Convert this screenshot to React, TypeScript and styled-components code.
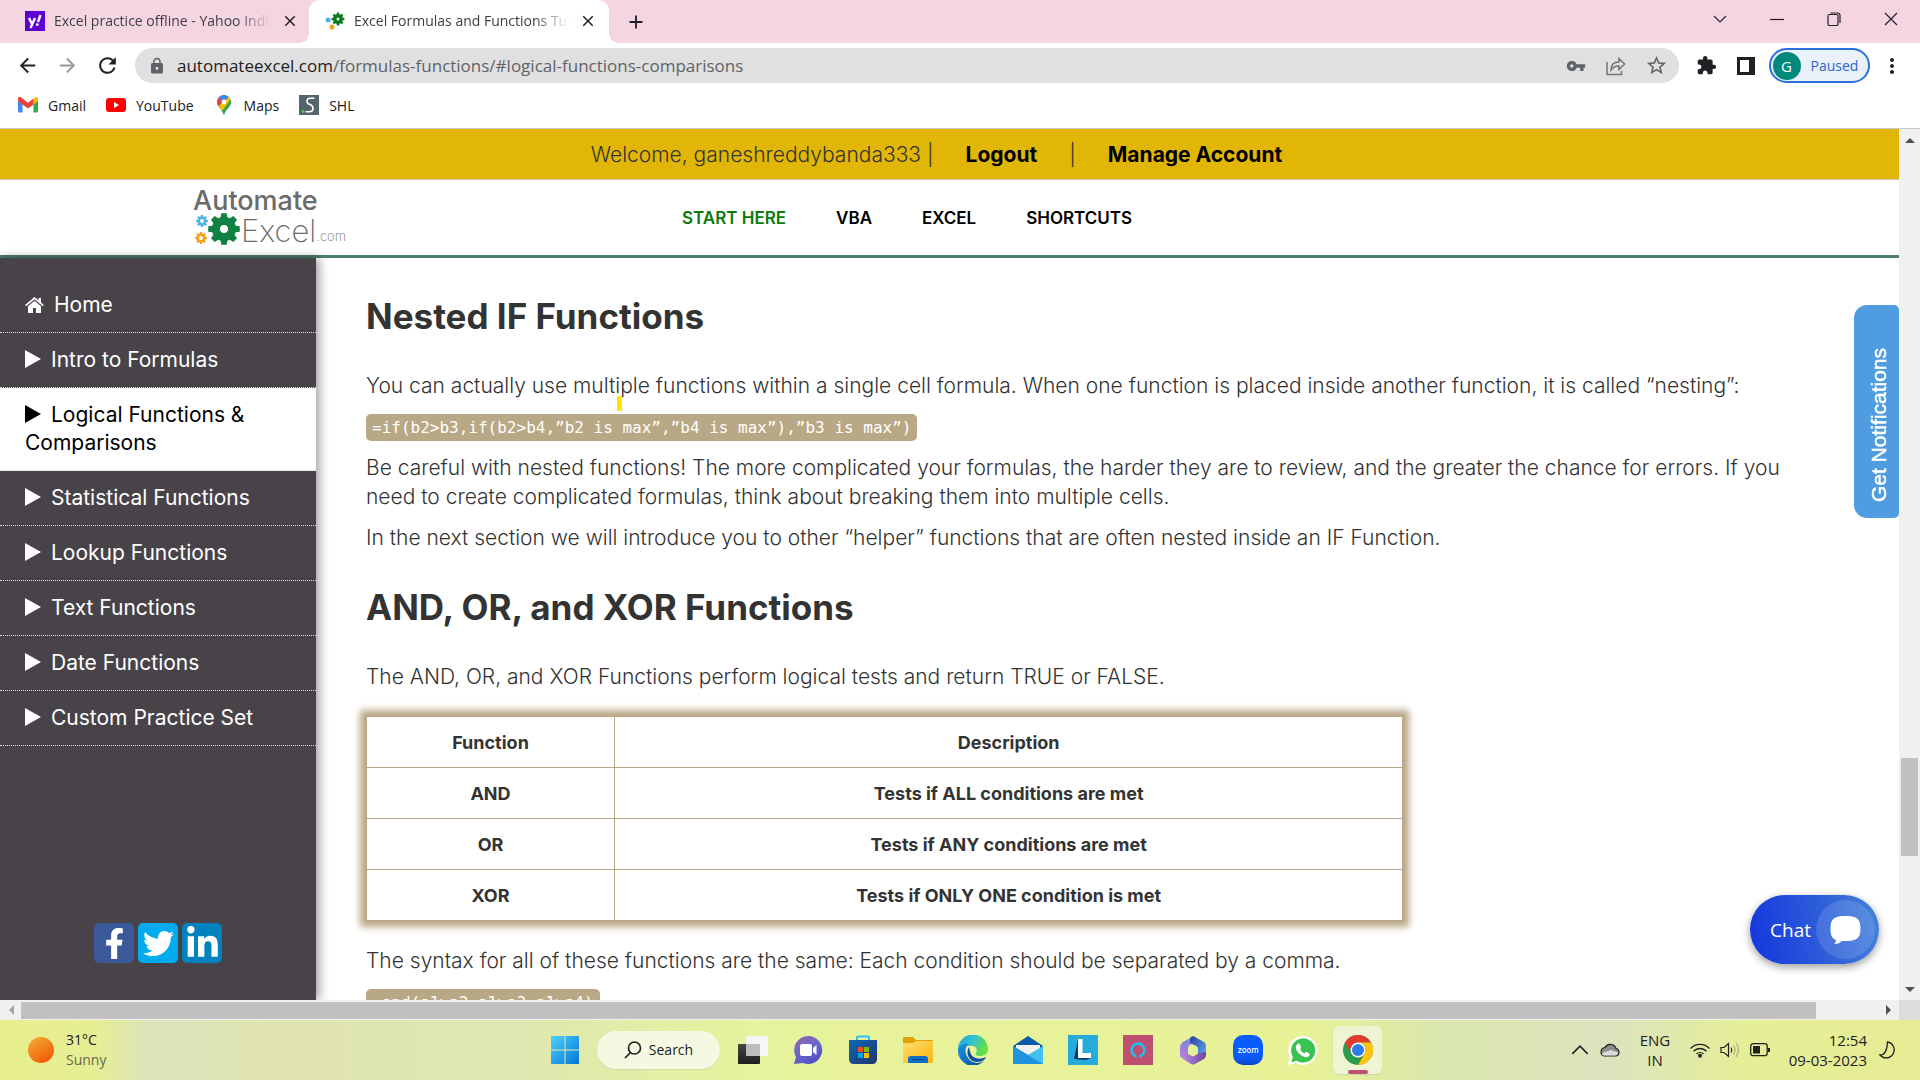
import React from "react";
import styled, { createGlobalStyle } from "styled-components";
import { MdExtension, MdLock, MdVpnKey, MdStarOutline, MdMoreVert, MdArrowBack, MdArrowForward, MdRefresh, MdClose, MdAdd } from "react-icons/md";
import { FaFacebookF, FaTwitter, FaLinkedinIn } from "react-icons/fa";

const site = `Inter, "Open Sans", sans-serif`;
const ui = `"Open Sans", "Noto Sans", sans-serif`;

const Global = createGlobalStyle`
  *, *::before, *::after { box-sizing: border-box; }
  html, body { margin: 0; height: 100%; overflow: hidden; }
  body { font-family: ${ui}; background: #fff; }
  button { font: inherit; border: 0; padding: 0; background: none; color: inherit; display: flex; align-items: center; justify-content: center; }
  a { color: inherit; text-decoration: none; }
  svg { display: block; flex: none; }
`;

const Screen = styled.div`
  display: flex;
  flex-direction: column;
  height: 100vh;
`;

/* ---------- browser chrome ---------- */
const TabStrip = styled.div`
  display: flex;
  height: 43px;
  background: #f6d5e3;
`;
const Tab = styled.div<{ $active?: boolean }>`
  display: flex;
  align-items: center;
  gap: 9px;
  position: relative;
  width: ${(p) => (p.$active ? 300 : 309)}px;
  padding: 0 ${(p) => (p.$active ? 11 : 9)}px 2px ${(p) => (p.$active ? 16 : 25)}px;
  background: ${(p) => (p.$active ? "#fff" : "transparent")};
  border-radius: 11px 11px 0 0;
  &::before, &::after {
    content: "";
    display: ${(p) => (p.$active ? "block" : "none")};
    position: absolute;
    bottom: 0;
    width: 10px;
    height: 10px;
  }
  &::before { left: -10px; background: radial-gradient(circle at 0 0, transparent 10px, #fff 10px); }
  &::after { right: -10px; background: radial-gradient(circle at 100% 0, transparent 10px, #fff 10px); }
`;
const TabTitle = styled.span`
  flex: 1;
  min-width: 0;
  white-space: nowrap;
  font-size: 14px;
  color: #3c4043;
  -webkit-mask-image: linear-gradient(90deg, #000 84%, transparent);
  mask-image: linear-gradient(90deg, #000 84%, transparent);
`;
const IconButton = styled.button<{ $w?: number; $color?: string }>`
  width: ${(p) => p.$w ?? 20}px;
  color: ${(p) => p.$color ?? "#202124"};
`;
const WindowButtons = styled.div`
  display: flex;
  margin-left: auto;
  padding: 0 1px 5px 0;
`;
const Toolbar = styled.div`
  display: flex;
  align-items: center;
  height: 45px;
  padding: 0 8px 0 7px;
`;
const AddressBar = styled.form`
  display: flex;
  align-items: center;
  flex: 1;
  height: 35px;
  margin: 0 7px;
  padding: 0 3px 0 13px;
  border-radius: 18px;
  background: #e0e0e0;
  color: #5f6368;
`;
const Url = styled.span`
  flex: 1;
  padding-left: 11px;
  font-size: 17px;
  white-space: nowrap;
  b { font-weight: 400; color: #202124; }
`;
const Profile = styled.button`
  gap: 10px;
  width: 101px;
  height: 35px;
  margin: 0 2px 0 3px;
  padding-right: 8px;
  border: 2px solid #2b71d9;
  border-radius: 18px;
  background: #eaf1fb;
  color: #2a66cc;
  font-size: 14px;
`;
const Avatar = styled.span`
  display: grid;
  place-items: center;
  width: 28px;
  height: 28px;
  border-radius: 50%;
  background: #00897b;
  color: #fff;
  font-size: 15px;
`;
const Bookmarks = styled.nav`
  display: flex;
  gap: 20px;
  height: 41px;
  padding: 0 18px 6px;
  border-bottom: 1px solid #c8cacc;
  font-size: 14px;
  color: #202124;
  a { display: flex; align-items: center; gap: 10px; }
`;

/* ---------- site ---------- */
const Viewport = styled.div`
  display: flex;
  flex: 1;
  min-height: 0;
`;
const Site = styled.div`
  display: flex;
  flex-direction: column;
  flex: 1;
  min-width: 0;
  position: relative;
  overflow: hidden;
  background: #fff;
  font-family: ${site};
`;
const Welcome = styled.div`
  display: flex;
  align-items: center;
  justify-content: center;
  gap: 32px;
  flex: none;
  height: 51px;
  padding-right: 26px;
  border-bottom: 1px solid #cfc9b4;
  background: #e2b606;
  color: #333;
  font-size: 21px;
  font-weight: 300;
  a { font-weight: 700; color: #000; }
`;
const SiteHeader = styled.header`
  display: flex;
  align-items: center;
  flex: none;
  height: 78px;
  padding-left: 193px;
  border-bottom: 3px solid #4c7f6e;
`;
const Logo = styled.a`
  display: flex;
  flex-direction: column;
  width: 489px;
  color: #6b6b6b;
`;
const LogoTop = styled.span`
  font-size: 27px;
  line-height: 24px;
  font-weight: 500;
`;
const LogoBottom = styled.span`
  display: flex;
  align-items: flex-end;
  font-size: 31px;
  line-height: 32px;
  font-weight: 200;
  small { font-size: 13px; line-height: 22px; }
`;
const MainNav = styled.nav`
  display: flex;
  gap: 50px;
  font-size: 17px;
  font-weight: 600;
  color: #000;
  a:first-child { color: #0b7a0b; }
`;
const Columns = styled.div`
  display: flex;
  flex: 1;
  min-height: 0;
`;
const Sidebar = styled.aside`
  display: flex;
  flex-direction: column;
  flex: none;
  width: 316px;
  padding-top: 20px;
  background: #484349;
  color: #fff;
  box-shadow: 3px 0 10px rgba(0, 0, 0, 0.4);
`;
const SideLink = styled.a<{ $active?: boolean }>`
  display: block;
  padding: 13px 25px;
  border-bottom: 1px dotted #ddd;
  background: ${(p) => (p.$active ? "#fff" : "transparent")};
  color: ${(p) => (p.$active ? "#000" : "#fff")};
  font-size: 21px;
  line-height: 28px;
  svg { display: inline-block; margin-right: 10px; vertical-align: -1px; }
`;
const Social = styled.div`
  display: flex;
  justify-content: center;
  gap: 4px;
  margin-top: auto;
  padding-bottom: 37px;
`;
const SocialLink = styled.a<{ $bg: string }>`
  display: grid;
  place-items: center;
  width: 40px;
  height: 40px;
  border-radius: 5px;
  background: ${(p) => p.$bg};
`;
const Article = styled.main`
  flex: 1;
  min-width: 0;
  overflow: hidden;
  padding: 36px 72px 0 50px;
  color: #333;
  font-size: 21px;
  font-weight: 300;
  line-height: 29px;
  h2 { margin: 0 0 33px; font-size: 35px; line-height: 44px; font-weight: 700; }
  p { margin: 0 0 12px; }
  p + h2 { margin-top: 33px; }
`;
const Code = styled.code`
  display: block;
  width: fit-content;
  margin: 14px 0 12px;
  padding: 0 6px;
  border-radius: 5px;
  background: #b9a886;
  color: #fff;
  font: 400 16px/27px "DejaVu Sans Mono", "Liberation Mono", monospace;
`;
const Table = styled.table`
  width: 71%;
  margin: 25px 0 25px;
  border-collapse: collapse;
  box-shadow: 0 0 7px 6px #b9a886;
  font-size: 18px;
  text-align: center;
  th, td { height: 51px; padding: 0; border: 1px solid #b9a886; font-weight: 700; }
  th:first-child { width: 248px; }
`;
const Caret = styled.span`
  position: absolute;
  left: 617px;
  top: 267px;
  width: 5px;
  height: 15px;
  background: #ffe600;
`;
const Notify = styled.button`
  position: absolute;
  right: 0;
  top: 176px;
  width: 45px;
  height: 213px;
  padding-left: 4px;
  border-radius: 13px 5px 5px 13px;
  background: #4f9de0;
  color: #fff;
  font: 400 21px "Liberation Sans", sans-serif;
  -webkit-text-stroke: 0.5px #fff;
  span { writing-mode: vertical-rl; transform: rotate(180deg); padding-bottom: 28px; }
`;
const Chat = styled.button`
  position: absolute;
  right: 20px;
  bottom: 36px;
  gap: 5px;
  width: 129px;
  height: 69px;
  padding-left: 16px;
  border-radius: 35px;
  background: linear-gradient(80deg, #1336dd, #2f60d9 60%, #4584da);
  box-shadow: 0 3px 8px rgba(0, 0, 0, 0.4);
  color: #fff;
  font: 400 19px ${ui};
  span { display: grid; place-items: center; width: 59px; height: 59px; border-radius: 50%; background: rgba(255, 255, 255, 0.13); }
`;

/* ---------- scrollbars ---------- */
const VBar = styled.div`
  display: flex;
  flex-direction: column;
  width: 21px;
  background: #f0f0f0;
  button { height: 21px; }
`;
const HBar = styled.div`
  display: flex;
  height: 20px;
  background: #f0f0f0;
  button { width: 21px; }
`;
const Track = styled.div<{ $column?: boolean }>`
  display: flex;
  flex: 1;
  flex-direction: ${(p) => (p.$column ? "column" : "row")};
  padding: ${(p) => (p.$column ? "0 2px" : "2px 0 1px")};
`;
const Space = styled.div<{ $grow: number }>`
  flex: ${(p) => p.$grow} 0 0;
`;
const Thumb = styled(Space)`
  background: #c1c1c1;
`;
const Corner = styled.div`
  width: 21px;
  background: #dcdcdc;
`;

/* ---------- taskbar ---------- */
const Taskbar = styled.footer`
  display: grid;
  grid-template-columns: 1fr auto 1fr;
  height: 60px;
  background: linear-gradient(90deg, #e9ef8c, #e6ee95 5%, #dce2bb 8%, #e0e5b0 14%, #dfe6b2 26%, #e7f39c 40%, #e7f297 68%, #dae7ae 75%, #dde3be 84%, #e5ef96 91%, #e7ec94);
  font-size: 15px;
  line-height: 20px;
  color: #222;
`;
const Weather = styled.div`
  display: flex;
  align-items: center;
  gap: 12px;
  padding-left: 28px;
  font-size: 14px;
  span { color: #666a45; }
`;
const Sun = styled.i`
  width: 26px;
  height: 26px;
  border-radius: 50%;
  background: linear-gradient(145deg, #f2b233, #f4600c 80%);
`;
const Apps = styled.div`
  display: flex;
  align-items: center;
  padding-left: 2px;
`;
const AppButton = styled.button<{ $active?: boolean }>`
  position: relative;
  width: ${(p) => (p.$active ? 49 : 55)}px;
  height: 48px;
  margin: 0 ${(p) => (p.$active ? 3 : 0)}px;
  border-radius: 6px;
  background: ${(p) => (p.$active ? "#eff5d2" : "transparent")};
  box-shadow: ${(p) => (p.$active ? "0 1px 1px #cdd5a5" : "none")};
  &::after {
    content: "";
    display: ${(p) => (p.$active ? "block" : "none")};
    position: absolute;
    bottom: 0;
    width: 20px;
    height: 4px;
    border-radius: 2px;
    background: #bf5070;
  }
`;
const Search = styled.button`
  gap: 7px;
  width: 123px;
  height: 38px;
  margin: 0 5px;
  border-radius: 19px;
  background: #f6f9e2;
  box-shadow: 0 1px 1px #d3dba5;
  font-size: 14px;
`;
const Tray = styled.div`
  display: flex;
  align-items: center;
  justify-content: flex-end;
  padding-right: 18px;
`;
const Stack = styled.div<{ $right?: boolean }>`
  width: ${(p) => (p.$right ? 97 : 60)}px;
  padding-right: ${(p) => (p.$right ? 5 : 0)}px;
  text-align: ${(p) => (p.$right ? "right" : "center")};
  white-space: nowrap;
`;
const TrayIcon = styled.button`
  width: 30px;
`;

/* ---------- drawings ---------- */
function gearPath(cx: number, cy: number, r: number, hole: number) {
  const pts: string[] = [];
  for (let i = 0; i < 8; i++) {
    [[-0.28, 0.76], [-0.17, 1], [0.17, 1], [0.28, 0.76]].forEach(([d, k]) => {
      const a = (i * Math.PI) / 4 + d;
      pts.push(`${(cx + Math.cos(a) * r * k).toFixed(2)} ${(cy + Math.sin(a) * r * k).toFixed(2)}`);
    });
  }
  return `M${pts.join("L")}Z M${cx - hole} ${cy}a${hole} ${hole} 0 1 0 ${hole * 2} 0a${hole} ${hole} 0 1 0 ${-hole * 2} 0Z`;
}
const Gears = () => (
  <svg width="48" height="34" viewBox="0 0 48 34" fillRule="evenodd">
    <path d={gearPath(9, 8, 6, 2)} fill="#4db3e6" />
    <path d={gearPath(8, 25, 6, 2)} fill="#f7a11a" />
    <path d={gearPath(31, 16, 16, 4)} fill="#118043" />
  </svg>
);
const GearFavicon = () => (
  <svg width="20" height="20" viewBox="0 0 20 20" fillRule="evenodd">
    <circle cx="3" cy="9" r="2.5" fill="#4db3e6" />
    <circle cx="7" cy="16" r="2.5" fill="#f7a11a" />
    <path d={gearPath(13, 8, 6.5, 1.5)} fill="#0b7a1b" />
  </svg>
);
const Yahoo = () => (
  <svg width="20" height="20" viewBox="0 0 20 20">
    <rect width="20" height="20" fill="#5f01d1" />
    <path d="M4 7l3 6M10 7l-4.500 10M15.500 4l-2.500 7" stroke="#fff" strokeWidth="2.400" />
    <circle cx="12.300" cy="13.600" r="1.400" fill="#fff" />
  </svg>
);
const Gmail = () => (
  <svg width="20" height="16" viewBox="0 0 20 16">
    <path d="M0 2v12q0 1.500 1.500 1.500H4.500V6z" fill="#4285f4" />
    <path d="M20 2v12q0 1.500-1.500 1.500H15.500V6z" fill="#34a853" />
    <path d="M15.500 2.500v5L20 4V2c0-2-2-2.500-3.200-1.500z" fill="#fbbc04" />
    <path d="M0 2c0-2 2-2.500 3.200-1.500L10 5.800l5.500-4.200v6L10 11.500 4.500 7.500 0 4z" fill="#ea4335" />
  </svg>
);
const YouTube = () => (
  <svg width="20" height="14" viewBox="0 0 20 14">
    <rect width="20" height="14" rx="3" fill="#f00" />
    <path d="M8 4v6l5-3z" fill="#fff" />
  </svg>
);
const MapPin = () => (
  <svg width="20" height="20" viewBox="0 0 20 20">
    <path d="M10 0a7 7 0 0 0-7 7c0 5 5.500 7 7 13z" fill="#4285f4" />
    <path d="M10 0a7 7 0 0 1 7 7c0 5-5.500 7-7 13C9 16 6 13 4.500 11z" fill="#34a853" />
    <path d="M4.500 11L14.500 2Q17 4 17 7L8 16z" fill="#fbbc04" />
    <path d="M10 20c1.500-6 7-8 7-13l-.5-2.500L8 16z" fill="#34a853" />
    <path d="M5 2.200L9 6 4.500 11Q1.500 6 5 2.200z" fill="#ea4335" />
    <path d="M5 2.200Q9.500-2 14.500 2L9 8z" fill="#4285f4" />
    <circle cx="10" cy="7" r="2.400" fill="#fff" />
  </svg>
);
const Shl = () => (
  <svg width="20" height="20" viewBox="0 0 20 20">
    <rect width="20" height="20" fill="#56646e" />
    <path d="M15.500 3.200H11q-3 0-3 3 0 2.500 3 3.300 3 1 3 3.700 0 3.500-3.500 3.500H6.500" fill="none" stroke="#fff" strokeWidth="1.600" />
    <circle cx="4" cy="16.500" r="1.300" fill="#5fd35f" />
  </svg>
);
const Arrow = ({ d, color = "#505050" }: { d: string; color?: string }) => (
  <svg width="10" height="10" viewBox="0 0 10 10"><path d={d} fill={color} /></svg>
);
const Play = () => (
  <svg width="16" height="18" viewBox="0 0 16 18"><path d="M0 0l16 9-16 9z" fill="currentColor" /></svg>
);
const House = () => (
  <svg width="19" height="16" viewBox="0 0 19 16" fill="currentColor">
    <path d="M9.500 0L0 8l1.200 1.300 8.300-7 8.300 7L19 8l-3-2.600V1h-2.500v2.300z" />
    <path d="M9.500 3.800L3 9.300V16h5v-5h3v5h5V9.300z" />
  </svg>
);
const Line = ({ d, w = 14, s = 1.2 }: { d: string; w?: number; s?: number }) => (
  <svg width={w} height={w} viewBox="0 0 14 14" fill="none" stroke="currentColor" strokeWidth={s}><path d={d} /></svg>
);
const Ic = ({ children }: { children: React.ReactNode }) => <svg width="30" height="30" viewBox="0 0 30 30">{children}</svg>;

const DefsSvg = styled.svg`
  position: absolute;
`;
const Defs = () => (
  <DefsSvg width="0" height="0">
    <defs>
      <linearGradient id="win" x1="0" y1="0" x2="1" y2="1"><stop stopColor="#4fd0ff" /><stop offset="1" stopColor="#0078d4" /></linearGradient>
      <linearGradient id="meet" x1="0" y1="0" x2="0.6" y2="1"><stop stopColor="#a15fae" /><stop offset="0.5" stopColor="#6a6ac8" /><stop offset="1" stopColor="#5650c8" /></linearGradient>
      <linearGradient id="store" x1="0" y1="0" x2="1" y2="1"><stop stopColor="#0d66b5" /><stop offset="1" stopColor="#25346a" /></linearGradient>
      <linearGradient id="folder" x1="0" y1="0" x2="1" y2="1"><stop stopColor="#ffdc70" /><stop offset="1" stopColor="#fbb70e" /></linearGradient>
      <linearGradient id="edge" x1="0" y1="0" x2="1" y2="0.4"><stop stopColor="#1f9de0" /><stop offset="0.5" stopColor="#2fc3d0" /><stop offset="1" stopColor="#66e043" /></linearGradient>
      <linearGradient id="edgeb" x1="0" y1="0" x2="1" y2="1"><stop stopColor="#1493e6" /><stop offset="1" stopColor="#0c4fa0" /></linearGradient>
      <linearGradient id="zoom" x1="0" y1="0" x2="0" y2="1"><stop stopColor="#0b5cff" /><stop offset="0.7" stopColor="#0b5cff" /><stop offset="1" stopColor="#0848c8" /></linearGradient>
      <linearGradient id="dark" x1="0" y1="0" x2="0" y2="1"><stop stopColor="#444" /><stop offset="1" stopColor="#1d1d1d" /></linearGradient>
      <linearGradient id="m1" x1="0" y1="0" x2="0" y2="1"><stop stopColor="#7486e0" /><stop offset="1" stopColor="#b77be0" /></linearGradient>
      <linearGradient id="m2" x1="0" y1="0" x2="1" y2="1"><stop stopColor="#2d3b9c" /><stop offset="1" stopColor="#5db4f5" /></linearGradient>
      <linearGradient id="m3" x1="0" y1="0" x2="1" y2="0"><stop stopColor="#c493ea" /><stop offset="1" stopColor="#6a459c" /></linearGradient>
    </defs>
  </DefsSvg>
);

const Windows = () => <Ic><path d="M1 1h13.500v13.500H1zM15.500 1H29v13.500H15.500zM1 15.500h13.500V29H1zM15.500 15.500H29V29H15.500z" fill="url(#win)" /></Ic>;
const TaskView = () => <Ic><rect x="0" y="9" width="22" height="20" rx="1" fill="url(#dark)" /><rect x="8" y="1" width="22" height="20" rx="1" fill="#f6f6f6" /><rect x="8" y="9" width="14" height="12" fill="#bdbdbd" /></Ic>;
const Meet = () => <Ic><path d="M15 1a14 14 0 1 1-5 27l-9 1 2-7A14 14 0 0 1 15 1z" fill="url(#meet)" /><rect x="7" y="9" width="12" height="12" rx="2" fill="#fff" /><path d="M20 13l3.500-3v10L20 17z" fill="#fff" /></Ic>;
const Store = () => <Ic><path d="M9 5V2.500Q9 1.500 10 1.500H20Q21 1.500 21 2.500V5" fill="none" stroke="#2cc4f4" strokeWidth="2" /><path d="M1 5h28v19q0 5-5 5H6q-5 0-5-5z" fill="url(#store)" /><path d="M10 12h5v5h-5z" fill="#f25022" /><path d="M16 12h5v5h-5z" fill="#7fba00" /><path d="M10 18h5v5h-5z" fill="#00a4ef" /><path d="M16 18h5v5h-5z" fill="#ffb900" /></Ic>;
const Explorer = () => <Ic><path d="M0 3q0-1 1-1h9l3 3h17v6H0z" fill="#e0a008" /><path d="M0 8h10l3-2h17v22H0z" fill="url(#folder)" /><path d="M5 28v-4q0-3 3-3h14q3 0 3 3v4z" fill="#0f6fc4" /><path d="M9 24.500h12" stroke="#0a4a8c" strokeWidth="1" /></Ic>;
const Edge = () => <Ic><path d="M0 15A15 15 0 0 1 30 14c0 5-4 7-8 7-3 0-5-1-4-3 2-3 0-7-4-7C7 10 2 12 0 15z" fill="url(#edge)" /><path d="M0 15C1 11 6 8 11 9c-5 2-5 12 2 17 3 2 8 3 13 0A15 15 0 0 1 0 15z" fill="url(#edgeb)" /><path d="M11 12c-4 6 0 15 8 15 3 0 5-1 7-2 1-1 2-2 1.500-3-5 3-13 2-15-4q-1-3-1.500-6z" fill="#0d50a0" /></Ic>;
const Mail = () => <Ic><path d="M0 11L15 1l15 10v6H0z" fill="#0a5ca8" /><path d="M3 10h24v10H3z" fill="#f1f1f1" /><path d="M0 11l15 9L30 11v18H0z" fill="#3fc2f2" /><path d="M0 11l30 18H0z" fill="#1f93dc" /></Ic>;
const LApp = () => <Ic><path d="M0 0h30v30H0z" fill="#27abd9" /><path d="M10 4L6 24l12 1 5-2-13-1z" fill="#11386b" /><path d="M10 4h4.500v14H23v5H10z" fill="#fff" /></Ic>;
const Alexa = () => <Ic><path d="M0 0h30v30H0z" fill="#be4f70" /><circle cx="15" cy="15" r="6.500" fill="none" stroke="#12c5f2" strokeWidth="2.400" /><path d="M13.500 21.300h3" stroke="#be4f70" strokeWidth="3.500" /></Ic>;
const M365 = () => (
  <Ic>
    <path d="M16 1L5 7Q2 9 2 12v8q0 3 3 3l5-3v-7q0-2 2-3l4-2z" fill="url(#m1)" />
    <path d="M14 1.500q1-.5 2 0L26 7q2 1 2 4v10q-1 3-4 1l-4-3v-5q0-2-2-3l-6-3V3z" fill="url(#m2)" />
    <path d="M2 19q0 3 3 3l5-3 4 2q1 .5 2 0l5-3 7-1v3q0 2-2 4l-9 5q-2 1-4 0l-8-5q-2-1-3-5z" fill="url(#m3)" />
    <circle cx="15" cy="15" r="4.800" fill="#e7f297" />
  </Ic>
);
const Zoom = () => <Ic><rect width="30" height="30" rx="10" fill="url(#zoom)" /><text x="15" y="17.500" fontFamily="Inter, sans-serif" fontSize="8" fontWeight="500" fill="#fff" textAnchor="middle">zoom</text></Ic>;
const Whats = () => <svg width="31" height="31" viewBox="-1 -1 32 32"><path d="M15 0a15 15 0 1 1-7 28L0 30l2-8A15 15 0 0 1 15 0z" fill="#fff" /><path d="M15 2.500a12.500 12.500 0 1 1-6 23L3.500 27 5 21.500A12.500 12.500 0 0 1 15 2.500z" fill="#3ac351" /><path d="M10 8q1.500-1 2.500 1l1 2.500q.3 1-1 2.200 1.500 3 4.500 4.300 1-1.800 2.200-1.500l3 1.500q.8 2-1.200 3.500-3 1.500-7.500-1.500-5-4-5.500-8 0-2.500 2-4z" fill="#fff" /></svg>;
const Chrome = () => <Ic><circle cx="15" cy="15" r="15" fill="#2a9a4b" /><path d="M15 0A15 15 0 0 1 28 7.500H15A7.500 7.500 0 0 0 8.500 18.700L2 7.500A15 15 0 0 1 15 0z" fill="#e33b2e" /><path d="M28 7.500A15 15 0 0 1 15 30l6.500-11.300A7.500 7.500 0 0 0 15 7.500z" fill="#fdc20f" /><circle cx="15" cy="15" r="7.500" fill="#fff" /><circle cx="15" cy="15" r="6" fill="#2f7de9" /></Ic>;

const apps: [string, () => React.JSX.Element][] = [
  ["Task view", TaskView], ["Meet", Meet], ["Store", Store], ["Explorer", Explorer], ["Edge", Edge], ["Mail", Mail],
  ["L", LApp], ["Alexa", Alexa], ["Microsoft 365", M365], ["Zoom", Zoom], ["WhatsApp", Whats], ["Chrome", Chrome],
];
const lessons = ["Intro to Formulas", "Logical Functions & Comparisons", "Statistical Functions", "Lookup Functions", "Text Functions", "Date Functions", "Custom Practice Set"];
const rows = [["AND", "Tests if ALL conditions are met"], ["OR", "Tests if ANY conditions are met"], ["XOR", "Tests if ONLY ONE condition is met"]];

export default function App() {
  return (
    <Screen>
      <Global />
      <Defs />
      <TabStrip>
        <Tab>
          <Yahoo />
          <TabTitle>Excel practice offline - Yahoo Indi</TabTitle>
          <IconButton aria-label="Close tab"><MdClose size={18} /></IconButton>
        </Tab>
        <Tab $active>
          <GearFavicon />
          <TabTitle>Excel Formulas and Functions Tut</TabTitle>
          <IconButton aria-label="Close tab"><MdClose size={18} /></IconButton>
        </Tab>
        <IconButton $w={54} aria-label="New tab"><MdAdd size={22} /></IconButton>
        <WindowButtons>
          <IconButton $w={57} aria-label="Search tabs"><Line d="M1 4l6 6 6-6" /></IconButton>
          <IconButton $w={57} aria-label="Minimize"><Line d="M0 7.500h14" /></IconButton>
          <IconButton $w={57} aria-label="Restore"><Line d="M2.500 2.500h7q1.500 0 1.500 1.500v8q0 1.500-1.500 1.500h-7Q1 13.500 1 12V4q0-1.500 1.500-1.500zM3.500 1h7Q13 1 13 3.500V11" /></IconButton>
          <IconButton $w={57} aria-label="Close"><Line d="M1 1l12 12M13 1L1 13" /></IconButton>
        </WindowButtons>
      </TabStrip>
      <Toolbar>
        <IconButton $w={40} aria-label="Back"><MdArrowBack size={23} /></IconButton>
        <IconButton $w={40} $color="#9a9a9a" aria-label="Forward"><MdArrowForward size={23} /></IconButton>
        <IconButton $w={41} aria-label="Reload"><MdRefresh size={25} /></IconButton>
        <AddressBar>
          <MdLock size={18} />
          <Url><b>automateexcel.com</b>/formulas-functions/#logical-functions-comparisons</Url>
          <IconButton type="button" $w={40} $color="#5f6368" aria-label="Passwords"><MdVpnKey size={20} /></IconButton>
          <IconButton type="button" $w={40} $color="#707478" aria-label="Share">
            <svg width="20" height="20" viewBox="0 0 20 20" fill="none" stroke="currentColor" strokeWidth="1.500"><path d="M1 6v12.500h14.500V15M5 14c0-5 3-8 8-8V2.500l5.500 5.500-5.500 5.500V10c-4 0-6 1-8 4z" /></svg>
          </IconButton>
          <IconButton type="button" $w={40} $color="#5f6368" aria-label="Bookmark"><MdStarOutline size={23} /></IconButton>
        </AddressBar>
        <IconButton $w={40} aria-label="Extensions"><MdExtension size={21} /></IconButton>
        <IconButton $w={40} aria-label="Side panel">
          <svg width="18" height="18" viewBox="0 0 18 18"><path d="M0 0h18v18H0zM3 3v12h9V3z" fill="currentColor" fillRule="evenodd" /></svg>
        </IconButton>
        <Profile><Avatar>G</Avatar>Paused</Profile>
        <IconButton $w={40} aria-label="Menu"><MdMoreVert size={24} /></IconButton>
      </Toolbar>
      <Bookmarks>
        <a href="#gmail"><Gmail />Gmail</a>
        <a href="#youtube"><YouTube />YouTube</a>
        <a href="#maps"><MapPin />Maps</a>
        <a href="#shl"><Shl />SHL</a>
      </Bookmarks>

      <Viewport>
        <Site>
          <Welcome>
            <span>Welcome, ganeshreddybanda333 |</span>
            <a href="#logout">Logout</a>
            <span>|</span>
            <a href="#account">Manage Account</a>
          </Welcome>
          <SiteHeader>
            <Logo href="#top">
              <LogoTop>Automate</LogoTop>
              <LogoBottom><Gears />Excel<small>.com</small></LogoBottom>
            </Logo>
            <MainNav>
              <a href="#start">START HERE</a>
              <a href="#vba">VBA</a>
              <a href="#excel">EXCEL</a>
              <a href="#shortcuts">SHORTCUTS</a>
            </MainNav>
          </SiteHeader>
          <Columns>
            <Sidebar>
              <SideLink href="#home"><House />Home</SideLink>
              {lessons.map((t, i) => (
                <SideLink key={t} href="#lesson" $active={i === 1}><Play />{t}</SideLink>
              ))}
              <Social>
                <SocialLink $bg="#3b5998" href="#fb" aria-label="Facebook"><FaFacebookF size={31} /></SocialLink>
                <SocialLink $bg="#00acee" href="#tw" aria-label="Twitter"><FaTwitter size={31} /></SocialLink>
                <SocialLink $bg="#0082bf" href="#in" aria-label="LinkedIn"><FaLinkedinIn size={35} /></SocialLink>
              </Social>
            </Sidebar>
            <Article>
              <h2>Nested IF Functions</h2>
              <p>You can actually use multiple functions within a single cell formula. When one function is placed inside another function, it is called “nesting”:</p>
              <Code>=if(b2&gt;b3,if(b2&gt;b4,”b2 is max”,”b4 is max”),”b3 is max”)</Code>
              <p>Be careful with nested functions! The more complicated your formulas, the harder they are to review, and the greater the chance for errors. If you need to create complicated formulas, think about breaking them into multiple cells.</p>
              <p>In the next section we will introduce you to other “helper” functions that are often nested inside an IF Function.</p>
              <h2>AND, OR, and XOR Functions</h2>
              <p>The AND, OR, and XOR Functions perform logical tests and return TRUE or FALSE.</p>
              <Table>
                <thead><tr><th>Function</th><th>Description</th></tr></thead>
                <tbody>{rows.map(([a, b]) => <tr key={a}><td>{a}</td><td>{b}</td></tr>)}</tbody>
              </Table>
              <p>The syntax for all of these functions are the same: Each condition should be separated by a comma.</p>
              <Code>=and(a1&gt;a2,a1&gt;a3,a1&gt;a4)</Code>
            </Article>
          </Columns>
          <Caret />
          <Notify><span>Get Notifications</span></Notify>
          <Chat>
            Chat
            <span><svg width="31" height="28" viewBox="0 0 31 28"><path d="M15.500 0C26 0 30.500 2 30.500 12.500S26 25 15.500 25H12q-3 3-7.500 3 1.500-2 1.500-4C1 22 .5 18 .5 12.500.5 2 5 0 15.500 0z" fill="#fff" /></svg></span>
          </Chat>
        </Site>
        <VBar>
          <button aria-label="Scroll up"><Arrow d="M0 8l5-5 5 5z" /></button>
          <Track $column><Space $grow={608} /><Thumb $grow={98} /><Space $grow={123} /></Track>
          <button aria-label="Scroll down"><Arrow d="M0 2l5 5 5-5z" /></button>
        </VBar>
      </Viewport>
      <HBar>
        <button aria-label="Scroll left"><Arrow d="M8 0L3 5l5 5z" color="#a3a3a3" /></button>
        <Track><Thumb $grow={1795} /><Space $grow={62} /></Track>
        <button aria-label="Scroll right"><Arrow d="M2 0l5 5-5 5z" /></button>
        <Corner />
      </HBar>

      <Taskbar>
        <Weather><Sun /><div>31°C<br /><span>Sunny</span></div></Weather>
        <Apps>
          <AppButton aria-label="Start"><Windows /></AppButton>
          <Search>
            <svg width="18" height="18" viewBox="0 0 18 18" fill="none" stroke="#222" strokeWidth="1.700"><circle cx="10.500" cy="7" r="6" /><path d="M6.500 11.500L1 17" /></svg>
            Search
          </Search>
          {apps.map(([n, I]) => <AppButton key={n} aria-label={n} $active={n === "Chrome"}><I /></AppButton>)}
        </Apps>
        <Tray>
          <TrayIcon aria-label="Hidden icons"><Line w={18} d="M1 10l6-6 6 6" /></TrayIcon>
          <TrayIcon aria-label="OneDrive">
            <svg width="20" height="14" viewBox="0 0 20 14"><path d="M4.500 13h11a3.800 3.800 0 0 0 .5-7.500A6 6 0 0 0 5 4.500a4.300 4.300 0 0 0-.5 8.500z" fill="#8c8c8c" stroke="#222" strokeWidth="1.200" /><path d="M2 11q1-2 3-2l6-2 7 2.500q0 3-3 3H5q-3 0-3-1.500z" fill="#ddd" /></svg>
          </TrayIcon>
          <Stack>ENG<br />IN</Stack>
          <TrayIcon aria-label="Wi-Fi">
            <svg width="20" height="16" viewBox="0 0 20 16" fill="none" stroke="#222" strokeWidth="1.300"><path d="M.5 6.500a13 13 0 0 1 19 0M3.500 9.300a9 9 0 0 1 13 0M6.500 12a5 5 0 0 1 7 0" /><circle cx="10" cy="13.800" r="1.300" fill="#222" /></svg>
          </TrayIcon>
          <TrayIcon aria-label="Volume">
            <svg width="20" height="16" viewBox="0 0 20 16" fill="none" stroke="#222" strokeWidth="1.200"><path d="M1 5.500h3L8.500 1.500v13L4 10.500H1zM11 5.500q1.500 2.500 0 5" /><path d="M13.500 3.500q3 4.500 0 9M16 1q5 7 0 14" stroke="#a9af80" /></svg>
          </TrayIcon>
          <TrayIcon aria-label="Battery">
            <svg width="20" height="14" viewBox="0 0 20 14"><rect x=".7" y=".7" width="16.500" height="12" rx="2.500" fill="none" stroke="#222" strokeWidth="1.300" /><path d="M3 3h7v7.500H3zM18 5h2v4h-2z" fill="#222" /></svg>
          </TrayIcon>
          <Stack $right>12:54<br />09-03-2023</Stack>
          <TrayIcon aria-label="Focus">
            <svg width="16" height="18" viewBox="0 0 16 18" fill="none" stroke="#222" strokeWidth="1.300"><path d="M8.500 1a8 8 0 1 1-7.500 13q7 0 7.500-13z" /></svg>
          </TrayIcon>
        </Tray>
      </Taskbar>
    </Screen>
  );
}
